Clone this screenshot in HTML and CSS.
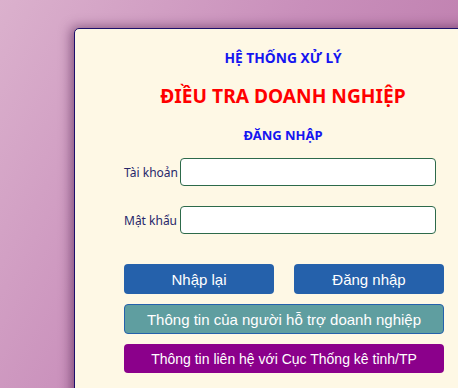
FILE: index.html
```html
<!DOCTYPE html>
<html lang="vi">
<head>
  <meta charset="UTF-8" />
  <title>Điều tra doanh nghiệp - Đăng nhập</title>
  <link rel="stylesheet" href="styles.css">
</head>
<body>
  <div class="login-box">
    <div class="sys-title">HỆ THỐNG XỬ LÝ</div>
    <div class="main-title">ĐIỀU TRA DOANH NGHIỆP</div>
    <div class="sub-title">ĐĂNG NHẬP</div>
    <form class="login-form" onsubmit="return false;">
      <div class="form-row">
        <label for="user">Tài khoản</label>
        <input type="text" id="user" />
      </div>
      <div class="form-row">
        <label for="pass">Mật khẩu</label>
        <input type="password" id="pass" />
      </div>
      <div class="btn-row">
        <button type="reset" class="btn btn-blue">Nhập lại</button>
        <button type="submit" class="btn btn-blue">Đăng nhập</button>
      </div>
      <button type="button" class="btn btn-support">Thông tin của người hỗ trợ doanh nghiệp</button>
      <button type="button" class="btn btn-contact">Thông tin liên hệ với Cục Thống kê tỉnh/TP</button>
    </form>
  </div>
</body>
</html>
```

FILE: styles.css
```css
html, body {
  margin: 0;
  padding: 0;
  height: 100%;
  overflow: hidden;
}

body {
  background: linear-gradient(120deg, #dbb1cd 0%, #c98fbb 45%, #b874a6 100%);
  font-family: "Noto Sans", "Open Sans", sans-serif;
}

.login-box {
  margin: 28px 0 0 74px;
  width: 418px;
  height: 420px;
  box-sizing: border-box;
  background-color: #fef8e5;
  border: 1px solid #1c0f6b;
  border-radius: 5px;
  box-shadow: -3px -1px 12px rgba(70, 20, 70, 0.55);
  padding-top: 19px;
}

.sys-title,
.main-title,
.sub-title {
  text-align: center;
  font-weight: 700;
}

.sys-title {
  color: #1515f0;
  font-size: 13.8px;
  line-height: 20px;
}

.main-title {
  color: #ff0000;
  font-size: 19.2px;
  line-height: 26px;
  margin-top: 15px;
}

.sub-title {
  color: #1515f0;
  font-size: 13px;
  line-height: 20px;
  margin-top: 16px;
}

.login-form {
  width: 320px;
  margin: 13px 0 0 49px;
  display: flex;
  flex-direction: column;
}

.form-row {
  display: flex;
  align-items: center;
  gap: 3px;
  margin-bottom: 20px;
}

.form-row label {
  width: 53px;
  text-align: right;
  font-size: 12px;
  color: #27276b;
  white-space: nowrap;
}

.form-row input {
  width: 256px;
  height: 28px;
  box-sizing: border-box;
  border: 1px solid #2d6a4a;
  border-radius: 4px;
  background: #fff;
  outline: none;
}

.btn-row {
  display: flex;
  justify-content: space-between;
  margin-top: 10px;
}

.btn {
  font-family: "Liberation Sans", Arial, sans-serif;
  color: #fff;
  border: none;
  border-radius: 4px;
  cursor: pointer;
  padding: 0;
}

.btn-blue {
  width: 150px;
  height: 30px;
  background-color: #2561ab;
  font-size: 15px;
}

.btn-support {
  margin-top: 10px;
  height: 30px;
  background-color: #5f9ea0;
  border: 1px solid #2561ab;
  font-size: 15px;
}

.btn-contact {
  margin-top: 10px;
  height: 29px;
  background-color: #8b008b;
  font-size: 14px;
}
```
